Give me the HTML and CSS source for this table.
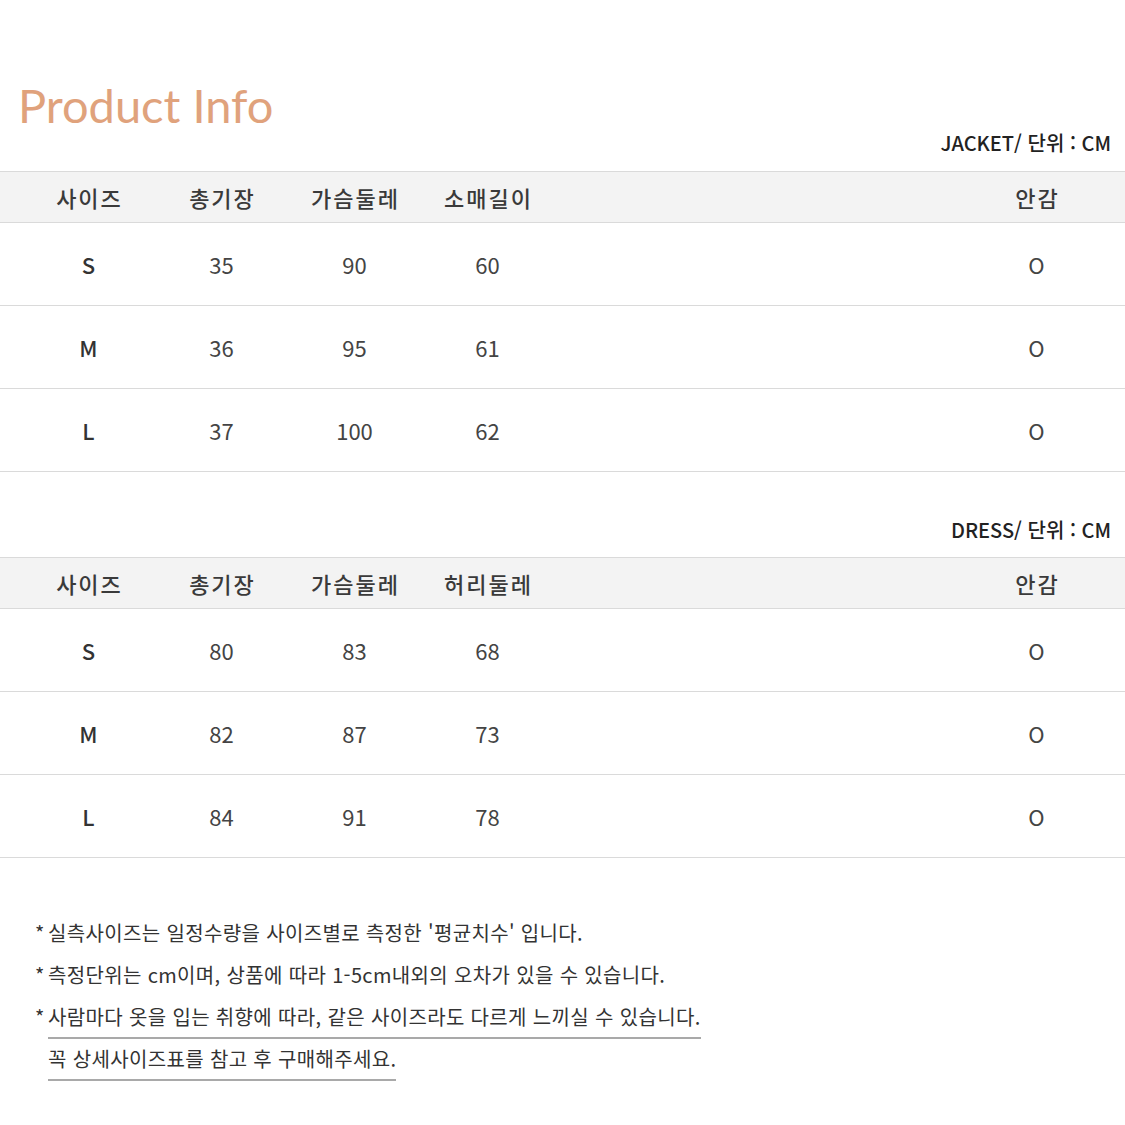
FILE: index.html
```html
<!DOCTYPE html>
<html lang="ko">
<head>
<meta charset="utf-8">
<title>Product Info</title>
<link rel="stylesheet" href="styles.css">
</head>
<body>
<div class="page">
  <h1 class="title">Product Info</h1>

  <div class="unit">JACKET/ 단위 : CM</div>
  <div class="table">
    <div class="row head">
      <div class="cell">사이즈</div><div class="cell">총기장</div><div class="cell">가슴둘레</div><div class="cell">소매길이</div><div class="cell spacer"></div><div class="cell">안감</div>
    </div>
    <div class="row">
      <div class="cell size">S</div><div class="cell">35</div><div class="cell">90</div><div class="cell">60</div><div class="cell spacer"></div><div class="cell">O</div>
    </div>
    <div class="row">
      <div class="cell size">M</div><div class="cell">36</div><div class="cell">95</div><div class="cell">61</div><div class="cell spacer"></div><div class="cell">O</div>
    </div>
    <div class="row">
      <div class="cell size">L</div><div class="cell">37</div><div class="cell">100</div><div class="cell">62</div><div class="cell spacer"></div><div class="cell">O</div>
    </div>
  </div>

  <div class="unit unit2">DRESS/ 단위 : CM</div>
  <div class="table">
    <div class="row head">
      <div class="cell">사이즈</div><div class="cell">총기장</div><div class="cell">가슴둘레</div><div class="cell">허리둘레</div><div class="cell spacer"></div><div class="cell">안감</div>
    </div>
    <div class="row">
      <div class="cell size">S</div><div class="cell">80</div><div class="cell">83</div><div class="cell">68</div><div class="cell spacer"></div><div class="cell">O</div>
    </div>
    <div class="row">
      <div class="cell size">M</div><div class="cell">82</div><div class="cell">87</div><div class="cell">73</div><div class="cell spacer"></div><div class="cell">O</div>
    </div>
    <div class="row">
      <div class="cell size">L</div><div class="cell">84</div><div class="cell">91</div><div class="cell">78</div><div class="cell spacer"></div><div class="cell">O</div>
    </div>
  </div>

  <div class="notes">
    <div class="note"><span class="star">*</span><span class="txt">실측사이즈는 일정수량을 사이즈별로 측정한 '평균치수' 입니다.</span></div>
    <div class="note"><span class="star">*</span><span class="txt">측정단위는 cm이며, 상품에 따라 1-5cm내외의 오차가 있을 수 있습니다.</span></div>
    <div class="note"><span class="star">*</span><span class="txt u">사람마다 옷을 입는 취향에 따라, 같은 사이즈라도 다르게 느끼실 수 있습니다.</span></div>
    <div class="note"><span class="star"></span><span class="txt u">꼭 상세사이즈표를 참고 후 구매해주세요.</span></div>
  </div>
</div>
</body>
</html>
```

FILE: styles.css
```css
* { box-sizing: border-box; }

html, body {
  margin: 0;
  padding: 0;
  background: #ffffff;
}

body {
  font-family: "Noto Sans CJK KR", "Noto Sans", sans-serif;
  color: #333333;
}

.page {
  width: 1125px;
  padding-top: 82px;
}

.title {
  margin: 0 0 0 18px;
  font-family: Lato, "Noto Sans", sans-serif;
  font-weight: 400;
  font-size: 47px;
  line-height: 47px;
  color: #e0a27c;
}

.unit {
  height: 28px;
  line-height: 28px;
  text-align: right;
  padding-right: 14px;
  font-size: 20px;
  font-weight: 500;
  color: #222222;
  margin-bottom: 14px;
}

.unit2 {
  margin-top: 44px;
  margin-bottom: 13px;
}

.table {
  border-top: 1px solid #dadada;
}

.row {
  display: grid;
  grid-template-columns: 133px 133px 133px 133px 1fr 133px;
  padding: 0 22px;
  height: 83px;
  border-bottom: 1px solid #dadada;
  align-items: center;
  font-size: 22px;
  color: #444444;
}

.row.head {
  height: 51px;
  background: #f3f3f3;
  color: #3a3a3a;
  font-weight: 500;
  letter-spacing: 2px;
}

.row.head .cell {
  padding-left: 2px;
}

.cell {
  text-align: center;
}

.size {
  font-weight: 500;
  color: #333333;
}

.notes {
  margin-top: 55px;
  padding-left: 35px;
}

.note {
  display: flex;
  height: 42px;
  font-size: 20px;
  letter-spacing: 0.35px;
  color: #333333;
}

.star {
  width: 13px;
  line-height: 40px;
}

.txt {
  line-height: 40px;
  height: 42px;
  border-bottom: 2px solid transparent;
  white-space: nowrap;
}

.txt.u {
  border-bottom-color: #a9a9a9;
}
```
